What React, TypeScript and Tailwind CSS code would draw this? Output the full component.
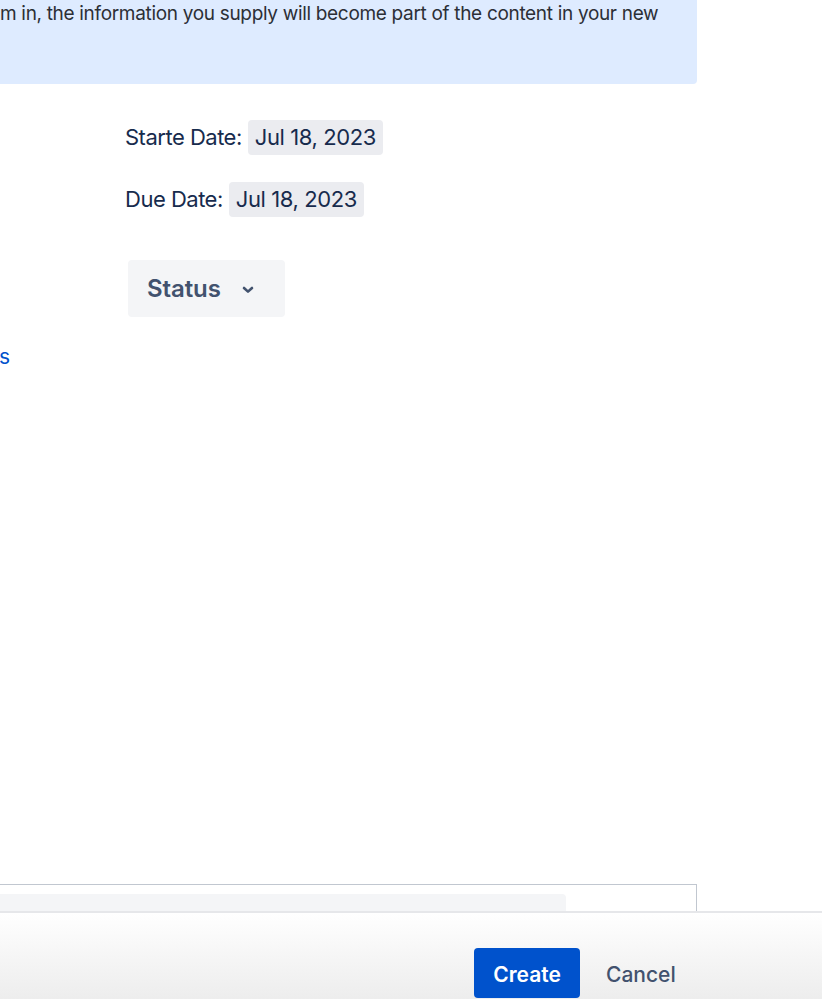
import React from "react";

export default function App() {
  const font = { fontFamily: 'Inter, "Noto Sans", "Liberation Sans", sans-serif' };
  return (
    <div className="w-[822px] h-[999px] overflow-hidden flex flex-col bg-white" style={font}>
      <div className="h-[911px] flex flex-col overflow-hidden">
        <div className="w-[697px] h-[84px] shrink-0 bg-[#deebff] rounded-br-[4px]">
          <p className="text-[19px] leading-[28px] tracking-[-0.32px] text-[#2c2f36] whitespace-nowrap">
            m in, the information you supply will become part of the content in your new
          </p>
        </div>
        <div className="ml-[125px] mt-[36px] flex flex-col text-[#172b4d]">
          <div className="flex items-center h-[35px] gap-[6px]">
            <span className="text-[22px] tracking-[-0.5px]">Starte Date:</span>
            <span className="h-[35px] px-[7px] flex items-center bg-[#ebecf0] rounded-[4px] text-[22px] tracking-[-0.4px]">Jul 18, 2023</span>
          </div>
          <div className="flex items-center h-[35px] gap-[6px] mt-[27px]">
            <span className="text-[22px] tracking-[-0.5px]">Due Date:</span>
            <span className="h-[35px] px-[7px] flex items-center bg-[#ebecf0] rounded-[4px] text-[22px] tracking-[-0.4px]">Jul 18, 2023</span>
          </div>
          <div className="mt-[43px] ml-[3px] w-[157px] h-[57px] bg-[#f4f5f7] rounded-[4px] flex items-center pl-[19px] gap-[21px] text-[#42526e]">
            <span className="text-[24px] font-semibold tracking-[-0.1px]">Status</span>
            <svg width="12" height="8" viewBox="0 0 12 8" className="mt-[2px]">
              <path d="M2 2l4 3.6L10 2" fill="none" stroke="#42526e" strokeWidth="2.6" strokeLinecap="round" strokeLinejoin="round" />
            </svg>
          </div>
        </div>
        <div className="mt-[26px] text-[21px] leading-[28px] text-[#0052cc] -ml-[1px]">s</div>
        <div className="mt-auto w-[697px] h-[27px] border-t border-r border-[#c1c7d0] pt-[9px]">
          <div className="w-[566px] h-[20px] bg-[#f4f5f7] rounded-tr-[4px]"></div>
        </div>
      </div>
      <div className="flex-1 border-t-[2px] border-[#e6e7ea] bg-gradient-to-b from-white to-[#ededed] flex items-end pb-[1px]">
        <div className="ml-[474px] flex items-center gap-[26px]">
          <button className="w-[106px] h-[50px] pt-[3px] bg-[#0052cc] rounded-[4px] text-white text-[21px] font-semibold">Create</button>
          <span className="text-[21px] pt-[3px] font-medium text-[#42526e]">Cancel</span>
        </div>
      </div>
    </div>
  );
}
